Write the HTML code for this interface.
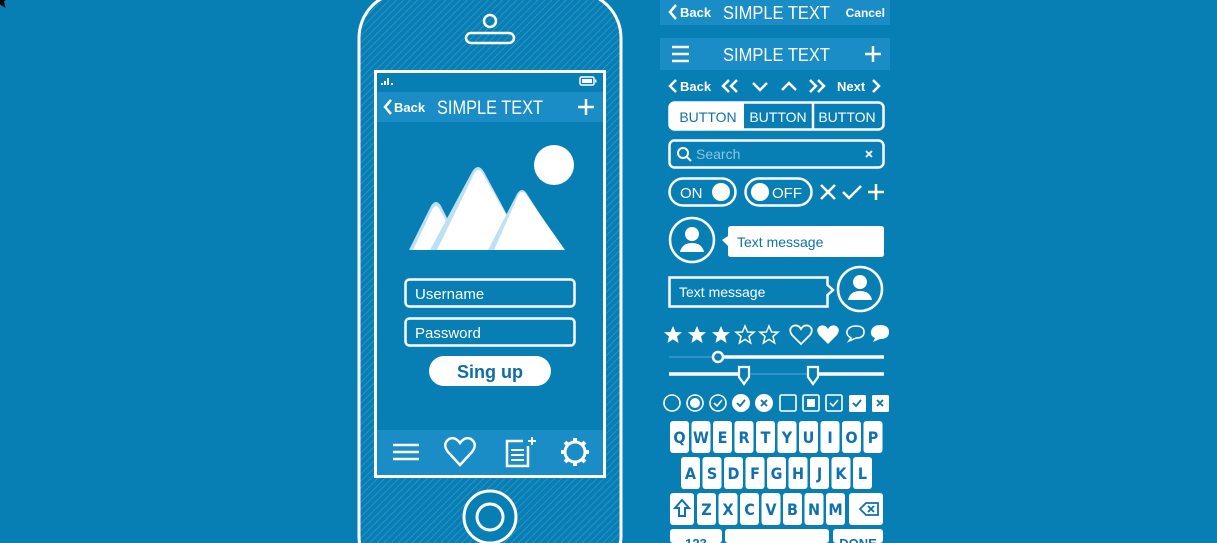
<!DOCTYPE html>
<html><head><meta charset="utf-8"><style>
html,body{margin:0;padding:0;background:#077fb4;width:1217px;height:543px;overflow:hidden}
svg{display:block}
text{font-family:"Liberation Sans",sans-serif}
.k{font-family:"DejaVu Sans Condensed","Liberation Sans",sans-serif;font-weight:bold;font-size:16px;fill:#0d72ad;text-anchor:middle}
</style></head><body>
<svg width="1217" height="543" viewBox="0 0 1217 543" xmlns="http://www.w3.org/2000/svg">
<defs>
<pattern id="h" width="5" height="5" patternUnits="userSpaceOnUse" patternTransform="rotate(45)">
<rect width="5" height="5" fill="#077fb4"/><line x1="0" y1="0" x2="0" y2="5" stroke="#3c9bcc" stroke-width="1.3"/>
</pattern>
</defs>
<rect width="1217" height="543" fill="#077fb4"/>
<!-- phone -->
<rect x="359" y="-8" width="262" height="590" rx="46" fill="url(#h)" stroke="#fff" stroke-width="3"/>
<circle cx="490" cy="21" r="6" fill="none" stroke="#fff" stroke-width="2.5"/>
<rect x="466" y="33" width="48" height="10" rx="5" fill="none" stroke="#fff" stroke-width="2.5"/>
<rect x="375.5" y="71.5" width="229" height="405" fill="#077fb4" stroke="#fff" stroke-width="3"/>
<rect x="377" y="92" width="226" height="30" fill="#1a8cc6"/>
<rect x="377" y="430" width="226" height="45" fill="#1a8cc6"/>
<!-- status -->
<rect x="381" y="83" width="2" height="2" fill="#fff"/><rect x="384" y="81" width="2" height="4" fill="#fff"/><rect x="387" y="78" width="2" height="7" fill="#fff"/><rect x="391" y="83" width="2" height="2" fill="#fff"/>
<rect x="580" y="77" width="14" height="8" rx="1.5" fill="none" stroke="#fff" stroke-width="1.5"/><rect x="582" y="79" width="10" height="4" fill="#fff"/><rect x="595" y="79.5" width="1.5" height="3" fill="#fff"/>
<path d="M391 100 L385 107 L391 114" fill="none" stroke="#fff" stroke-width="2.5"/>
<text x="394" y="112" font-size="13" font-weight="bold" fill="#fff">Back</text>
<text x="437" y="114" font-size="19" fill="#fff" textLength="106" lengthAdjust="spacingAndGlyphs">SIMPLE TEXT</text>
<path d="M586 99 V115 M578 107 H594" stroke="#fff" stroke-width="2.5"/>
<!-- image -->
<circle cx="554" cy="165" r="20" fill="#fff"/>
<path d="M409 250 L431 206 Q436 198 441 206 L458 240 L450 250 Z" fill="#bfe0f2"/>
<path d="M413 250 L432 210 Q436 202 440 210 L462 250 Z" fill="#fff"/>
<path d="M430 250 L472 172 Q478 162 484 172 L526 250 Z" fill="#bfe0f2"/>
<path d="M437 250 L474 174 Q478 166 483 174 L526 250 Z" fill="#fff"/>
<path d="M488 250 L517 194 Q522 186 527 194 L563 250 Z" fill="#bfe0f2"/>
<path d="M494 250 L518 196 Q522 188 527 196 L565 250 Z" fill="#fff"/>
<!-- form -->
<rect x="405.5" y="279.5" width="169" height="27" rx="4" fill="none" stroke="#fff" stroke-width="2.5"/>
<text x="415" y="299" font-size="15" fill="#fff">Username</text>
<rect x="405.5" y="318.5" width="169" height="27" rx="4" fill="none" stroke="#fff" stroke-width="2.5"/>
<text x="415" y="338" font-size="15" fill="#fff">Password</text>
<rect x="429" y="356" width="122" height="30" rx="15" fill="#fff"/>
<text x="490" y="378" font-size="18" font-weight="bold" fill="#0d6ea6" text-anchor="middle">Sing up</text>
<!-- tab icons -->
<path d="M393 445 H419 M393 452 H419 M393 459 H419" stroke="#fff" stroke-width="2.5"/>
<path d="M460 465 L448 452 Q442 444 449 439 Q455 436 460 443 Q465 436 471 439 Q478 444 472 452 Z" fill="none" stroke="#fff" stroke-width="2.5"/>
<path d="M528 446 V466 H507 V441 H523" fill="none" stroke="#fff" stroke-width="2.5"/>
<path d="M511 450 H524 M511 455 H524 M511 460 H524" stroke="#fff" stroke-width="2"/>
<path d="M532 437 V445 M528 441 H536" stroke="#fff" stroke-width="2"/>
<circle cx="575" cy="452" r="10" fill="none" stroke="#fff" stroke-width="3"/>
<g stroke="#fff" stroke-width="4"><path d="M575 438 V442 M575 462 V466 M561 452 H565 M585 452 H589 M565 442 L568 445 M582 459 L585 462 M585 442 L582 445 M568 459 L565 462"/></g>
<!-- home -->
<circle cx="490" cy="517" r="26" fill="#077fb4" stroke="#fff" stroke-width="3"/>
<circle cx="490" cy="517" r="13" fill="none" stroke="#fff" stroke-width="3"/>

<!-- right panel -->
<rect x="660" y="0" width="230" height="25" fill="#1a8cc6"/>
<path d="M676 5 L670 12 L676 19" fill="none" stroke="#fff" stroke-width="2.5"/>
<text x="680" y="17" font-size="13" font-weight="bold" fill="#fff">Back</text>
<text x="723" y="19" font-size="18" fill="#fff" textLength="107" lengthAdjust="spacingAndGlyphs">SIMPLE TEXT</text>
<text x="885" y="17" font-size="12" font-weight="bold" fill="#fff" text-anchor="end">Cancel</text>
<rect x="660" y="38" width="230" height="32" fill="#1a8cc6"/>
<path d="M672 47 H689 M672 54 H689 M672 61 H689" stroke="#fff" stroke-width="2.5"/>
<text x="723" y="61" font-size="18" fill="#fff" textLength="107" lengthAdjust="spacingAndGlyphs">SIMPLE TEXT</text>
<path d="M873 46 V62 M865 54 H881" stroke="#fff" stroke-width="2.5"/>
<!-- nav row -->
<path d="M676 80 L670 86 L676 92" fill="none" stroke="#fff" stroke-width="2.5"/>
<text x="680" y="91" font-size="13" font-weight="bold" fill="#fff">Back</text>
<path d="M729 80 L723 86 L729 92 M737 80 L731 86 L737 92 M753 83 L760 90 L767 83 M782 90 L789 83 L796 90 M810 80 L816 86 L810 92 M818 80 L824 86 L818 92" fill="none" stroke="#fff" stroke-width="2.5"/>
<text x="837" y="91" font-size="13" font-weight="bold" fill="#fff">Next</text>
<path d="M873 80 L879 86 L873 92" fill="none" stroke="#fff" stroke-width="2.5"/>
<!-- segmented -->
<rect x="669.5" y="102.5" width="214" height="27" rx="5" fill="none" stroke="#fff" stroke-width="2.5"/>
<path d="M674 102.5 H744 V129.5 H674 Q669.5 129.5 669.5 125 V107 Q669.5 102.5 674 102.5Z" fill="#fff"/>
<line x1="813" y1="102" x2="813" y2="130" stroke="#fff" stroke-width="2.5"/>
<text x="708" y="122" font-size="14" fill="#0d72ad" text-anchor="middle">BUTTON</text>
<text x="778" y="122" font-size="14" fill="#fff" text-anchor="middle">BUTTON</text>
<text x="847" y="122" font-size="14" fill="#fff" text-anchor="middle">BUTTON</text>
<!-- search -->
<rect x="669.5" y="140.5" width="214" height="27" rx="5" fill="none" stroke="#fff" stroke-width="2.5"/>
<circle cx="683" cy="153" r="5" fill="none" stroke="#fff" stroke-width="2"/><path d="M687 157 L691 161" stroke="#fff" stroke-width="2"/>
<text x="696" y="159" font-size="14" fill="#8cc4e2">Search</text>
<path d="M866 151 L872 157 M872 151 L866 157" stroke="#fff" stroke-width="1.8"/>
<!-- toggles -->
<rect x="669.5" y="178.5" width="66" height="27" rx="13.5" fill="none" stroke="#fff" stroke-width="2.5"/>
<text x="680" y="198" font-size="15" fill="#fff">ON</text>
<circle cx="721" cy="192" r="9" fill="#fff"/>
<rect x="745.5" y="178.5" width="66" height="27" rx="13.5" fill="none" stroke="#fff" stroke-width="2.5"/>
<circle cx="760" cy="192" r="9" fill="#fff"/>
<text x="772" y="198" font-size="15" fill="#fff">OFF</text>
<path d="M821 185 L835 199 M835 185 L821 199 M843 192 L849 198 L861 186 M876 184 V200 M868 192 H884" fill="none" stroke="#fff" stroke-width="2.5"/>
<!-- messages -->
<circle cx="692" cy="240" r="22" fill="none" stroke="#fff" stroke-width="2.5"/>
<circle cx="692" cy="234" r="7" fill="#fff"/><path d="M680 252 Q682 243 692 243 Q702 243 704 252 Z" fill="#fff"/>
<path d="M731 226 H881 Q884 226 884 229 V254 Q884 257 881 257 H731 Q728 257 728 254 V246 L722 240 L728 236 V229 Q728 226 731 226 Z" fill="#fff"/>
<text x="737" y="247" font-size="14" fill="#0d72ad">Text message</text>
<path d="M669.5 277.5 H827.5 V285 L833 290 L827.5 295 V306.5 H669.5 Z" fill="none" stroke="#fff" stroke-width="2.5"/>
<text x="679" y="297" font-size="14" fill="#fff">Text message</text>
<circle cx="860" cy="289" r="22" fill="none" stroke="#fff" stroke-width="2.5"/>
<circle cx="860" cy="282" r="7" fill="#fff"/><path d="M848 300 Q850 291 860 291 Q870 291 872 300 Z" fill="#fff"/>
<!-- stars -->
<g id="st"><path d="M0 -9 L2.6 -3 L9 -2.8 L4 1.4 L5.6 8 L0 4.4 L-5.6 8 L-4 1.4 L-9 -2.8 L-2.6 -3 Z"/></g>
<use href="#st" x="673" y="335" fill="#fff"/>
<use href="#st" x="697" y="335" fill="#fff"/>
<use href="#st" x="721" y="335" fill="#fff"/>
<use href="#st" x="745" y="335" fill="none" stroke="#fff" stroke-width="1.5"/>
<use href="#st" x="769" y="335" fill="none" stroke="#fff" stroke-width="1.5"/>
<path d="M801 344 L792 335 Q788 329 793 326 Q798 324 801 329 Q804 324 809 326 Q814 329 810 335 Z" fill="none" stroke="#fff" stroke-width="1.8"/>
<path d="M828 344 L819 335 Q815 329 820 326 Q825 324 828 329 Q831 324 836 326 Q841 329 837 335 Z" fill="#fff"/>
<path d="M849 341 L851 338 Q846 335 847 331 Q849 326 856 326 Q864 326 864 332 Q864 338 856 338 Z" fill="none" stroke="#fff" stroke-width="1.6"/>
<path d="M873 342 L875 338 Q870 336 871 331 Q873 325 880 325 Q889 325 889 332 Q889 339 880 339 Z" fill="#fff"/>
<!-- sliders -->
<path d="M669 357 H714" stroke="#3a9ad0" stroke-width="1.5"/>
<path d="M722 357 H884" stroke="#fff" stroke-width="3.5"/>
<circle cx="718" cy="357" r="5" fill="#077fb4" stroke="#fff" stroke-width="2.5"/>
<path d="M669 374 H740 M818 374 H884" stroke="#fff" stroke-width="3.5"/>
<path d="M748 374 H808" stroke="#3a9ad0" stroke-width="1.5"/>
<path d="M739 367 H749 V377 L744 384 L739 377 Z M808 367 H818 V377 L813 384 L808 377 Z" fill="#077fb4" stroke="#fff" stroke-width="2.2"/>
<!-- checks -->
<g fill="none" stroke="#fff" stroke-width="1.6">
<circle cx="672" cy="403" r="8"/>
<circle cx="695" cy="403" r="8"/>
<circle cx="718" cy="403" r="8"/>
<rect x="780" y="395" width="16" height="16" rx="1.5"/>
<rect x="803" y="395" width="16" height="16" rx="1.5"/>
<rect x="826" y="395" width="16" height="16" rx="1.5"/>
</g>
<circle cx="695" cy="403" r="5" fill="#fff"/>
<rect x="807" y="399" width="8" height="8" fill="#fff"/>
<circle cx="741" cy="403" r="9" fill="#fff"/>
<circle cx="764" cy="403" r="9" fill="#fff"/>
<rect x="849" y="395" width="17" height="17" rx="1.5" fill="#fff"/>
<rect x="872" y="395" width="17" height="17" rx="1.5" fill="#fff"/>
<path d="M714 403 L717 406 L722 400 M830 403 L833 406 L838 400" fill="none" stroke="#fff" stroke-width="1.6"/>
<path d="M737 403 L740 406 L745 400 M853 403 L856 406 L861 400 M761 400 L767 406 M767 400 L761 406 M877 400 L883 406 M883 400 L877 406" fill="none" stroke="#0d72ad" stroke-width="1.8"/>
<!-- keyboard -->
<g fill="#fff">
<rect x="670" y="421" width="19" height="32" rx="3"/><rect x="691.5" y="421" width="19" height="32" rx="3"/><rect x="713" y="421" width="19" height="32" rx="3"/><rect x="734.5" y="421" width="19" height="32" rx="3"/><rect x="756" y="421" width="19" height="32" rx="3"/><rect x="777.5" y="421" width="19" height="32" rx="3"/><rect x="799" y="421" width="19" height="32" rx="3"/><rect x="820.5" y="421" width="19" height="32" rx="3"/><rect x="842" y="421" width="19" height="32" rx="3"/><rect x="863.5" y="421" width="19" height="32" rx="3"/>
<rect x="681" y="457" width="19" height="32" rx="3"/><rect x="702.5" y="457" width="19" height="32" rx="3"/><rect x="724" y="457" width="19" height="32" rx="3"/><rect x="745.5" y="457" width="19" height="32" rx="3"/><rect x="767" y="457" width="19" height="32" rx="3"/><rect x="788.5" y="457" width="19" height="32" rx="3"/><rect x="810" y="457" width="19" height="32" rx="3"/><rect x="831.5" y="457" width="19" height="32" rx="3"/><rect x="853" y="457" width="19" height="32" rx="3"/>
<rect x="670" y="493" width="24" height="32" rx="3"/><rect x="697" y="493" width="19" height="32" rx="3"/><rect x="718.5" y="493" width="19" height="32" rx="3"/><rect x="740" y="493" width="19" height="32" rx="3"/><rect x="761.5" y="493" width="19" height="32" rx="3"/><rect x="783" y="493" width="19" height="32" rx="3"/><rect x="804.5" y="493" width="19" height="32" rx="3"/><rect x="826" y="493" width="19" height="32" rx="3"/><rect x="849" y="493" width="34" height="32" rx="3"/>
<rect x="670" y="529" width="52" height="14" rx="3"/><rect x="725" y="529" width="104" height="14" rx="3"/><rect x="833" y="529" width="50" height="14" rx="3"/>
</g>
<text class="k" y="443"><tspan x="679.5">Q</tspan><tspan x="701">W</tspan><tspan x="722.5">E</tspan><tspan x="744">R</tspan><tspan x="765.5">T</tspan><tspan x="787">Y</tspan><tspan x="808.5">U</tspan><tspan x="830">I</tspan><tspan x="851.5">O</tspan><tspan x="873">P</tspan></text>
<text class="k" y="479"><tspan x="690.5">A</tspan><tspan x="712">S</tspan><tspan x="733.5">D</tspan><tspan x="755">F</tspan><tspan x="776.5">G</tspan><tspan x="798">H</tspan><tspan x="819.5">J</tspan><tspan x="841">K</tspan><tspan x="862.5">L</tspan></text>
<text class="k" y="515"><tspan x="706.5">Z</tspan><tspan x="728">X</tspan><tspan x="749.5">C</tspan><tspan x="771">V</tspan><tspan x="792.5">B</tspan><tspan x="814">N</tspan><tspan x="835.5">M</tspan></text>
<path d="M682 500 L675 508 H679 V516 H685 V508 H689 Z" fill="none" stroke="#0d72ad" stroke-width="2"/>
<path d="M860 509 L866 503 H878 V515 H866 Z M868 506 L874 512 M874 506 L868 512" fill="none" stroke="#0d72ad" stroke-width="1.8"/>
<text x="696" y="548" font-size="13" font-weight="bold" fill="#0d72ad" text-anchor="middle">123</text>
<text x="858" y="548" font-size="13" font-weight="bold" fill="#0d72ad" text-anchor="middle">DONE</text>
</svg>
</body></html>
